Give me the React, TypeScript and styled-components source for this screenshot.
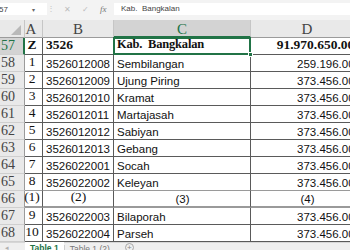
import React from 'react'
import styled, { createGlobalStyle, css } from 'styled-components'

const GlobalStyle = createGlobalStyle`
  html, body {
    margin: 0;
    padding: 0;
    background: #f3f3f3;
  }
  * {
    box-sizing: border-box;
  }
`

const SERIF = `'Liberation Serif', 'Times New Roman', serif`
const SANS = `'Liberation Sans', Arial, sans-serif`
const GREEN = '#217346'

type Row = {
  no: number
  a: string
  b: string
  c: string
  d: string
  kind?: 'total' | 'index'
}

const rows: Row[] = [
  { no: 57, a: 'Z', b: '3526', c: 'Kab.  Bangkalan', d: '91.970.650.000', kind: 'total' },
  { no: 58, a: '1', b: '3526012008', c: 'Sembilangan', d: '259.196.000' },
  { no: 59, a: '2', b: '3526012009', c: 'Ujung Piring', d: '373.456.000' },
  { no: 60, a: '3', b: '3526012010', c: 'Kramat', d: '373.456.000' },
  { no: 61, a: '4', b: '3526012011', c: 'Martajasah', d: '373.456.000' },
  { no: 62, a: '5', b: '3526012012', c: 'Sabiyan', d: '373.456.000' },
  { no: 63, a: '6', b: '3526012013', c: 'Gebang', d: '373.456.000' },
  { no: 64, a: '7', b: '3526022001', c: 'Socah', d: '373.456.000' },
  { no: 65, a: '8', b: '3526022002', c: 'Keleyan', d: '373.456.000' },
  { no: 66, a: '(1)', b: '(2)', c: '(3)', d: '(4)', kind: 'index' },
  { no: 67, a: '9', b: '3526022003', c: 'Bilaporah', d: '373.456.000' },
  { no: 68, a: '10', b: '3526022004', c: 'Parseh', d: '373.456.000' }
]

const App: React.FC = () => {
  return (
    <Window>
      <GlobalStyle />
      <FormulaBar>
        <NameBox>
          <span>57</span>
          <Caret>▾</Caret>
        </NameBox>
        <Grip>⋮</Grip>
        <Actions>
          <Action>✕</Action>
          <Action>✓</Action>
          <Fx>fx</Fx>
        </Actions>
        <Input>Kab.&nbsp;&nbsp;Bangkalan</Input>
      </FormulaBar>

      <Sheet>
        <Corner>
          <CornerMark />
        </Corner>
        <ColHead $shift>A</ColHead>
        <ColHead>B</ColHead>
        <ColHead $active>C</ColHead>
        <ColHead>D</ColHead>

        {rows.map(r => {
          const total = r.kind === 'total'
          const index = r.kind === 'index'
          const active = r.no === 57
          return (
            <React.Fragment key={r.no}>
              <RowHead $active={active}>{r.no}</RowHead>
              <Cell $align="center" $serif $bold={total} $index={index} $shift>
                {r.a}
              </Cell>
              <Cell
                $align={index ? 'center' : 'left'}
                $serif={total || index}
                $bold={total}
                $index={index}
              >
                {r.b}
              </Cell>
              <Cell
                $align={index ? 'center' : 'left'}
                $serif={total}
                $bold={total}
                $index={index}
                $selected={active}
              >
                {r.c}
                {active && <Handle />}
              </Cell>
              <Cell
                $align={index ? 'center' : 'right'}
                $serif={total}
                $bold={total}
                $index={index}
              >
                {r.d}
              </Cell>
            </React.Fragment>
          )
        })}
      </Sheet>

      <TabBar>
        <Nav>◂</Nav>
        <Tab $active>Table 1</Tab>
        <TabDivider />
        <Tab>Table 1 (2)</Tab>
        <AddTab>+</AddTab>
      </TabBar>
    </Window>
  )
}

const Window = styled.div`
  width: 350px;
  height: 250px;
  overflow: hidden;
  background: #f3f3f3;
`

const FormulaBar = styled.div`
  height: 20px;
  display: flex;
  align-items: flex-start;
  padding-top: 3px;
  font-family: ${SANS};
  font-size: 8px;
  color: #444;
`

const NameBox = styled.div`
  width: 48px;
  height: 12px;
  background: #fff;
  display: flex;
  align-items: center;
  justify-content: space-between;
  padding: 0 12px 0 0;
  margin-left: -1px;
`

const Caret = styled.span`
  font-size: 6px;
  color: #666;
`

const Grip = styled.div`
  width: 7px;
  height: 12px;
  line-height: 12px;
  text-align: center;
  color: #c4c4c4;
  font-size: 8px;
`

const Actions = styled.div`
  width: 58px;
  height: 12px;
  display: flex;
  align-items: center;
  justify-content: space-around;
  padding-left: 4px;
`

const Action = styled.span`
  color: #bcbcbc;
  font-size: 8px;
`

const Fx = styled.span`
  font-family: ${SERIF};
  font-style: italic;
  font-size: 9px;
  color: #777;
`

const Input = styled.div`
  flex: 1;
  height: 12px;
  background: #fff;
  line-height: 12px;
  padding-left: 7px;
  margin-left: 2px;
  white-space: pre;
`

const Sheet = styled.div`
  display: grid;
  grid-template-columns: 25px 18px 71px 137px 113px;
  grid-template-rows: 18px repeat(12, 17px);
  background: #fff;
  width: 364px;
`

const headBase = css`
  background: #e9e9e9;
  font-family: ${SERIF};
  color: #444;
  display: flex;
  align-items: center;
  overflow: hidden;
  white-space: nowrap;
`

const Corner = styled.div`
  ${headBase};
  border-right: 1px solid #c6c6c6;
  border-bottom: 1px solid #9b9b9b;
  position: relative;
`

const CornerMark = styled.div`
  position: absolute;
  right: 3px;
  bottom: 2px;
  width: 0;
  height: 0;
  border-left: 10px solid transparent;
  border-bottom: 10px solid #b9b9b9;
`

const ColHead = styled.div<{ $active?: boolean; $shift?: boolean }>`
  ${headBase};
  justify-content: center;
  font-size: 15px;
  padding-top: 2px;
  border-right: 1px solid #c6c6c6;
  border-bottom: 1px solid #9b9b9b;
  ${p => p.$shift && 'padding-right: 5px;'}
  ${p =>
    p.$active &&
    css`
      background: #d3d3d3;
      color: ${GREEN};
      border-bottom: 2px solid ${GREEN};
    `}
`

const RowHead = styled.div<{ $active?: boolean }>`
  ${headBase};
  font-size: 14px;
  padding-left: 1px;
  border-right: 1px solid #9b9b9b;
  border-bottom: 1px solid #cfcfcf;
  ${p =>
    p.$active &&
    css`
      background: #d3d3d3;
      color: ${GREEN};
      border-right: 2px solid ${GREEN};
    `}
`

type CellProps = {
  $align: 'left' | 'center' | 'right'
  $serif?: boolean
  $bold?: boolean
  $index?: boolean
  $selected?: boolean
  $shift?: boolean
}

const Cell = styled.div<CellProps>`
  position: relative;
  display: flex;
  align-items: flex-end;
  padding: 0 2px 1px 3px;
  justify-content: ${p =>
    p.$align === 'left' ? 'flex-start' : p.$align === 'right' ? 'flex-end' : 'center'};
  font-family: ${p => (p.$serif ? SERIF : SANS)};
  font-size: ${p => (p.$serif ? '13.5px' : '11.5px')};
  font-weight: ${p => (p.$bold ? 700 : 400)};
  color: #111;
  white-space: pre;
  overflow: visible;
  border-right: 1px solid #5a5a5a;
  border-bottom: 1px solid #5a5a5a;
  ${p => p.$shift && 'padding-right: 6px;'}
  ${p =>
    p.$index &&
    css`
      border-top: 1px solid #9a9a9a;
      border-bottom: 2px solid #9a9a9a;
      margin-top: -1px;
    `}
  ${p =>
    p.$selected &&
    css`
      border: 2px solid ${GREEN};
      margin: -1px 0 0 -1px;
      padding-left: 2px;
      font-size: 12.5px;
      letter-spacing: -0.2px;
      z-index: 1;
    `}
`

const Handle = styled.span`
  position: absolute;
  right: -4px;
  bottom: -4px;
  width: 5px;
  height: 5px;
  background: ${GREEN};
  border: 1px solid #fff;
`

const TabBar = styled.div`
  height: 20px;
  display: flex;
  align-items: flex-start;
  background: #efefef;
  border-top: 1px solid #d6d6d6;
  font-family: ${SANS};
  font-size: 8.5px;
`

const Nav = styled.div`
  width: 25px;
  padding-left: 5px;
  color: #b0b0b0;
  font-size: 7px;
  line-height: 10px;
`

const Tab = styled.div<{ $active?: boolean }>`
  padding: 1px 5px 0;
  line-height: 10px;
  height: 16px;
  color: ${p => (p.$active ? GREEN : '#777')};
  font-weight: ${p => (p.$active ? 700 : 400)};
  background: ${p => (p.$active ? '#fff' : 'transparent')};
  ${p => p.$active && `margin-top: -1px;`}
`

const TabDivider = styled.div`
  width: 1px;
  height: 8px;
  margin-top: 2px;
  background: #cfcfcf;
`

const AddTab = styled.div`
  margin-left: 10px;
  width: 9px;
  height: 9px;
  border: 1px solid #a8a8a8;
  border-radius: 50%;
  color: #888;
  font-size: 8px;
  line-height: 7px;
  text-align: center;
`

export default App
